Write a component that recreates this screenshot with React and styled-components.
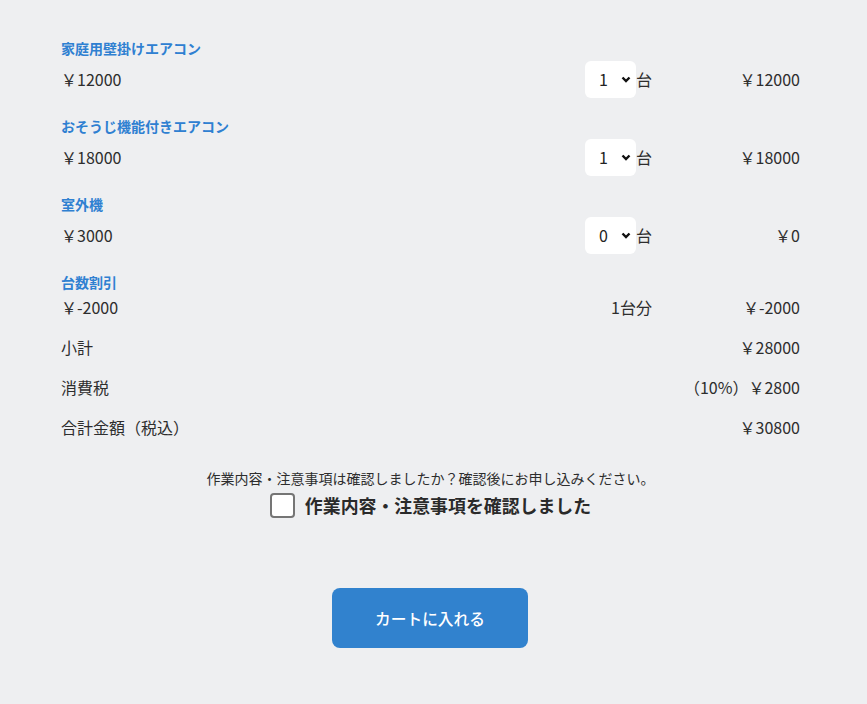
import React, { useState } from "react"
import styled, { createGlobalStyle } from "styled-components"

const GlobalStyle = createGlobalStyle`
    html, body {
        margin: 0;
        padding: 0;
        background: #eeeff1;
    }
    body {
        font-family: "Noto Sans CJK JP", "Noto Sans", sans-serif;
        color: #2d2d2d;
    }
`

const Page = styled.div`
    min-height: 704px;
    padding: 38px 67px 0 61px;
    box-sizing: border-box;
`

const ItemBlock = styled.div`
    margin-bottom: 18px;
`

const ItemTitle = styled.div`
    font-size: 14px;
    font-weight: 700;
    line-height: 20px;
    color: #2f80d1;
    margin-bottom: 2px;
`

const Row = styled.div`
    display: grid;
    grid-template-columns: 1fr auto 148px;
    align-items: center;
    height: ${(p) => p.$height || 38}px;
    font-size: 16px;
`

const Qty = styled.div`
    display: flex;
    align-items: center;
    justify-content: flex-end;
`

const Price = styled.div`
    text-align: right;
`

const SelectWrap = styled.div`
    position: relative;
    width: 51px;
    height: 37px;
`

const Select = styled.select`
    appearance: none;
    width: 100%;
    height: 100%;
    border: none;
    border-radius: 6px;
    background: #fff;
    font-family: inherit;
    font-size: 16px;
    color: #222;
    padding: 0 0 0 14px;
    outline: none;
`

const Chevron = styled.svg`
    position: absolute;
    right: 5px;
    top: 15px;
    pointer-events: none;
`

const Summary = styled.div`
    margin-top: -11px;
`

const Note = styled.div`
    margin-top: 22px;
    text-align: center;
    font-size: 14px;
    line-height: 18px;
`

const ConfirmLabel = styled.label`
    display: flex;
    justify-content: center;
    align-items: center;
    gap: 10px;
    margin-top: 5px;
    font-size: 17.9px;
    font-weight: 700;
    color: #2a2a2a;
`

const Box = styled.span`
    width: 21px;
    height: 21px;
    border: 2px solid #757575;
    border-radius: 4px;
    background: #fff;
    display: inline-block;
`

const ButtonRow = styled.div`
    display: flex;
    justify-content: center;
    margin-top: 70px;
    padding-right: 1px;
`

const CartButton = styled.button`
    width: 196px;
    height: 60px;
    border: none;
    border-radius: 8px;
    background: #3182ce;
    color: #fff;
    font-family: inherit;
    font-size: 15.7px;
    font-weight: 500;
`

const items = [
    { name: "家庭用壁掛けエアコン", price: 12000, qty: 1 },
    { name: "おそうじ機能付きエアコン", price: 18000, qty: 1 },
    { name: "室外機", price: 3000, qty: 0 },
]

const QtySelect = ({ value }) => {
    const [v, setV] = useState(value)
    return (
        <SelectWrap>
            <Select value={v} onChange={(e) => setV(Number(e.target.value))}>
                {[0, 1, 2, 3, 4, 5].map((n) => (
                    <option key={n} value={n}>{n}</option>
                ))}
            </Select>
            <Chevron width="10" height="7" viewBox="0 0 10 7">
                <polyline points="1.5,1.5 5,5 8.5,1.5" fill="none" stroke="#111" strokeWidth="2.4" />
            </Chevron>
        </SelectWrap>
    )
}

const App = () => (
    <>
        <GlobalStyle />
        <Page>
            {items.map((item) => (
                <ItemBlock key={item.name}>
                    <ItemTitle>{item.name}</ItemTitle>
                    <Row>
                        <div>￥{item.price}</div>
                        <Qty>
                            <QtySelect value={item.qty} />
                            台
                        </Qty>
                        <Price>￥{item.price * item.qty}</Price>
                    </Row>
                </ItemBlock>
            ))}
            <ItemBlock>
                <ItemTitle>台数割引</ItemTitle>
                <Row $height={26}>
                    <div>￥-2000</div>
                    <Qty>1台分</Qty>
                    <Price>￥-2000</Price>
                </Row>
            </ItemBlock>
            <Summary>
                <Row $height={40}>
                    <div>小計</div>
                    <Qty />
                    <Price>￥28000</Price>
                </Row>
                <Row $height={40}>
                    <div>消費税</div>
                    <Qty />
                    <Price>（10%）￥2800</Price>
                </Row>
                <Row $height={40}>
                    <div>合計金額（税込）</div>
                    <Qty />
                    <Price>￥30800</Price>
                </Row>
            </Summary>
            <Note>作業内容・注意事項は確認しましたか？確認後にお申し込みください。</Note>
            <ConfirmLabel>
                <Box />
                作業内容・注意事項を確認しました
            </ConfirmLabel>
            <ButtonRow>
                <CartButton>カートに入れる</CartButton>
            </ButtonRow>
        </Page>
    </>
)

export default App
